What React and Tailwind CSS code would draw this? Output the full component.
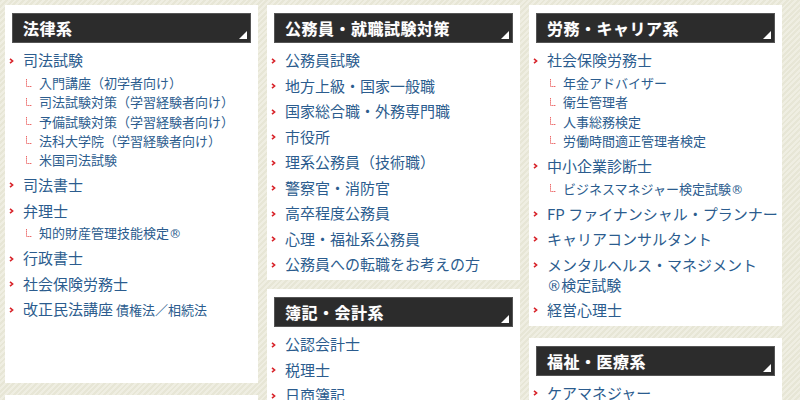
import React from 'react';

const font = { fontFamily: '"Noto Sans CJK JP", "Noto Sans", sans-serif' };

const R = () => <span className="font-['DejaVu_Sans'] text-[0.95em] leading-none">®</span>;

const Chevron = () => (
  <svg width="5" height="6" viewBox="0 0 5 6" className="block">
    <path d="M1 0.8 L3.6 3 L1 5.2" fill="none" stroke="#d8232a" strokeWidth="1.6" />
  </svg>
);

const SubMark = () => (
  <svg width="6" height="8" viewBox="0 0 6 8" className="block">
    <path d="M0.5 0 V7.5 H6" fill="none" stroke="#ec6a6a" strokeWidth="1" strokeDasharray="1.5 0.6" />
  </svg>
);

const Header = ({ title }) => (
  <div className="relative h-[30px] bg-[#2c2c2c] border border-[#555] flex items-center pl-[10px]">
    <span className="text-white font-bold text-[16px] leading-none tracking-[0.5px] [text-shadow:0_0_1px_rgba(255,255,255,0.4)]">{title}</span>
    <span className="absolute right-[3px] bottom-[3px] w-0 h-0 border-l-[8px] border-l-transparent border-b-[8px] border-b-white" />
  </div>
);

const Item = ({ label, note, subs }) => (
  <li>
    <div className="flex items-start">
      <span className="w-[18px] shrink-0 flex pl-[4px] pt-[10px]"><Chevron /></span>
      <span className="text-[15px] leading-[20px] py-[2.75px] text-[#2b5c8e]">
        {label}
        {note && <span className="text-[13px] ml-[3px]">{note}</span>}
      </span>
    </div>
    {subs && (
      <ul className="mb-[3px]">
        {subs.map((s, i) => (
          <li key={i} className="flex items-center h-[19.25px]">
            <span className="w-[34px] shrink-0 flex pl-[21px]"><SubMark /></span>
            <span className="text-[13px] leading-[19px] text-[#2b5c8e] whitespace-nowrap">{s}</span>
          </li>
        ))}
      </ul>
    )}
  </li>
);

const Card = ({ title, items, className = '' }) => (
  <div className={`bg-white px-[7px] pt-[8px] pb-[3px] ${className}`}>
    <Header title={title} />
    <ul className="mt-[4.5px] -mx-[7px]">
      {items.map((it, i) => (
        <Item key={i} {...it} />
      ))}
    </ul>
  </div>
);

const law = [
  {
    label: '司法試験',
    subs: ['入門講座（初学者向け）', '司法試験対策（学習経験者向け）', '予備試験対策（学習経験者向け）', '法科大学院（学習経験者向け）', '米国司法試験'],
  },
  { label: '司法書士' },
  { label: '弁理士', subs: [<>知的財産管理技能検定<R /></>] },
  { label: '行政書士' },
  { label: '社会保険労務士' },
  { label: '改正民法講座', note: '債権法／相続法' },
];

const civil = [
  { label: '公務員試験' },
  { label: '地方上級・国家一般職' },
  { label: '国家総合職・外務専門職' },
  { label: '市役所' },
  { label: '理系公務員（技術職）' },
  { label: '警察官・消防官' },
  { label: '高卒程度公務員' },
  { label: '心理・福祉系公務員' },
  { label: '公務員への転職をお考えの方' },
];

const accounting = [{ label: '公認会計士' }, { label: '税理士' }, { label: '日商簿記' }, { label: '建設業経理士' }];

const career = [
  { label: '社会保険労務士', subs: ['年金アドバイザー', '衛生管理者', '人事総務検定', '労働時間適正管理者検定'] },
  { label: '中小企業診断士', subs: [<>ビジネスマネジャー検定試験<R /></>] },
  { label: 'FP ファイナンシャル・プランナー' },
  { label: 'キャリアコンサルタント' },
  {
    label: (
      <>
        メンタルヘルス・マネジメント
        <br />
        <R />検定試験
      </>
    ),
  },
  { label: '経営心理士' },
];

const welfare = [{ label: 'ケアマネジャー' }, { label: '社会福祉士' }];

export default function App() {
  return (
    <div
      style={font}
      className="w-[800px] h-[400px] overflow-hidden bg-[repeating-linear-gradient(135deg,#e7e6d6_0px,#e7e6d6_2px,#efeee2_2px,#efeee2_4px)]"
    >
      <div className="grid grid-cols-[253px_253px_253px] gap-x-[9px] pl-[5px] pt-[5px] items-start">
        <div className="flex flex-col gap-[12px]">
          <Card title="法律系" items={law} className="h-[378px]" />
          <Card title="語学系" items={[{ label: '英語' }]} />
        </div>
        <div className="flex flex-col gap-[9px]">
          <Card title="公務員・就職試験対策" items={civil} />
          <Card title="簿記・会計系" items={accounting} />
        </div>
        <div className="flex flex-col gap-[12px]">
          <Card title="労務・キャリア系" items={career} />
          <Card title="福祉・医療系" items={welfare} />
        </div>
      </div>
    </div>
  );
}
